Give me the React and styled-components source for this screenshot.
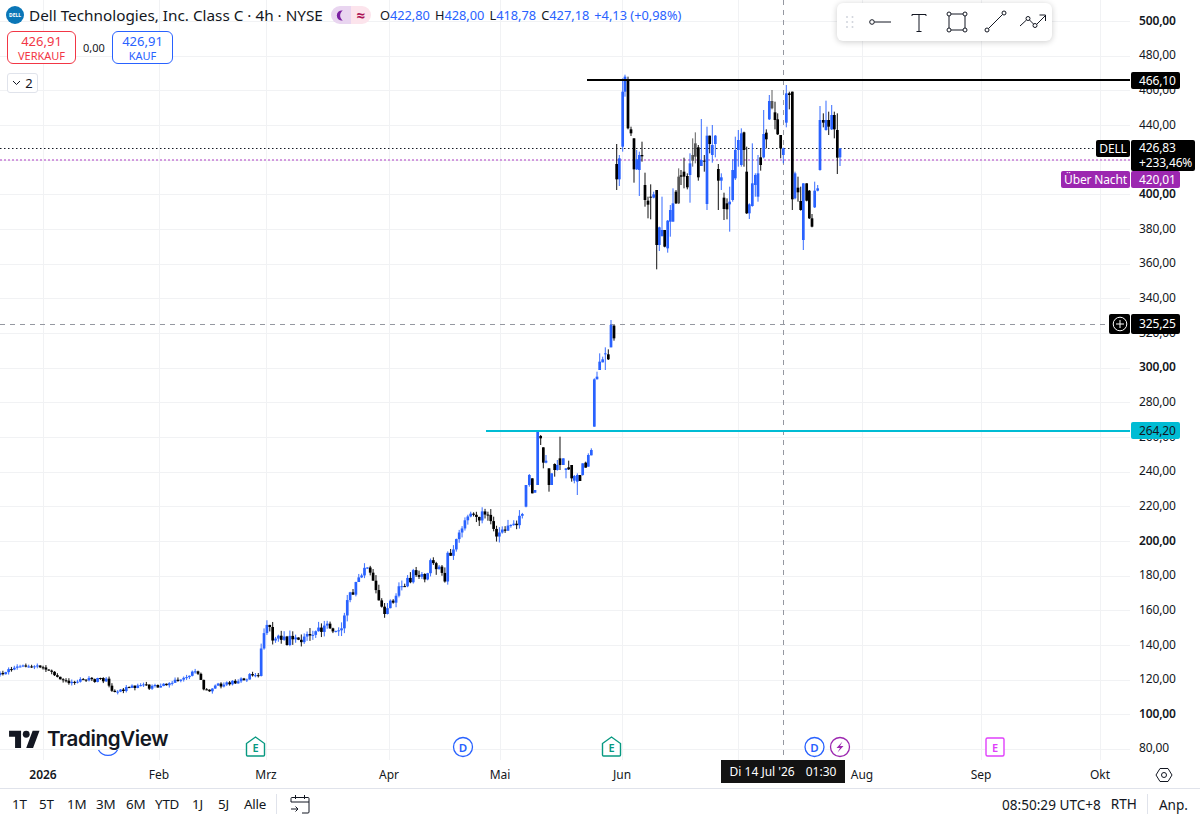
import React from "react";
import styled, { createGlobalStyle } from "styled-components";

const BLUE = "#2962ff";
const BLACK = "#000000";
const FONT = `"Noto Sans", "Open Sans", "DejaVu Sans", sans-serif`;

const Global = createGlobalStyle`
  html, body { margin: 0; padding: 0; background: #fff; overflow: hidden; }
  body { font-family: ${FONT}; color: #131722; }
  * { box-sizing: border-box; }
`;

// price labels top to bottom, the round hundreds are bolder
const prices = [500, 480, 460, 440, 420, 400, 380, 360, 340, 320, 300, 280, 260, 240, 220, 200, 180, 160, 140, 120, 100, 80];
const priceY = (i) => 21 + i * 34.67;
const gridX = [43, 159, 266, 389, 500, 622, 738, 862, 981, 1100];

// close path for the older part of the chart, read off the picture as [x, y]
const keys = [
  [0, 675], [10, 669], [25, 666], [45, 668], [52, 672], [60, 677], [65, 680], [70, 685], [80, 680], [95, 680],
  [107, 680], [112, 692], [120, 690], [135, 686], [155, 687], [170, 683], [180, 680], [195, 672], [200, 675], [205, 692],
  [215, 686], [235, 682], [250, 676], [258, 678], [261, 652], [264, 630], [270, 625], [273, 640], [285, 640], [300, 640],
  [320, 630], [330, 626], [340, 632], [347, 605], [355, 585], [363, 570], [368, 568], [375, 583], [380, 600], [385, 612],
  [388, 608], [393, 598], [402, 587], [410, 580], [413, 567], [418, 575], [425, 578], [430, 560], [437, 568], [445, 580],
  [447, 557], [453, 550], [458, 535], [465, 523], [470, 515], [477, 518], [482, 513], [490, 514], [493, 532], [498, 532],
  [505, 528], [513, 525], [522, 515], [525, 505],
];

const closeAt = (x) => {
  for (let i = 1; i < keys.length; i++) {
    if (x <= keys[i][0]) {
      const [x0, y0] = keys[i - 1];
      const [x1, y1] = keys[i];
      return y0 + ((y1 - y0) * (x - x0)) / (x1 - x0);
    }
  }
  return keys[keys.length - 1][1];
};

const rnd = (() => {
  let s = 4711;
  return () => {
    s = (s * 16807) % 2147483647;
    return s / 2147483647;
  };
})();

const older = [];
let prev = closeAt(0);
for (let x = 0; x < 525; x += 2.87) {
  const small = x < 260;
  const c = closeAt(x) + (rnd() - 0.5) * (small ? 4.5 : 10);
  const top = Math.min(prev, c);
  const bot = Math.max(prev, c);
  older.push({
    x,
    hi: top - rnd() * (small ? 2.5 : 6),
    top,
    bot: Math.max(bot, top + 1),
    lo: bot + rnd() * (small ? 2.5 : 6),
    up: c < prev,
  });
  prev = c;
}

// [zoom x, wick top, body top, body bottom, wick bottom, colour], in 3x crop coordinates
const breakout = [
  [138, 525, 525, 590, 592, "b"], [148, 492, 495, 525, 530, "b"], [157, 505, 505, 550, 550, "k"], [165, 540, 540, 548, 548, "b"],
  [173, 365, 365, 525, 525, "b"], [182, 375, 378, 385, 405, "k"], [190, 412, 412, 458, 475, "k"], [198, 435, 452, 458, 460, "b"],
  [207, 475, 475, 525, 545, "k"], [215, 490, 490, 525, 525, "b"], [224, 460, 462, 480, 500, "k"], [232, 450, 465, 480, 482, "b"],
  [240, 380, 445, 465, 480, "k"], [250, 445, 445, 465, 465, "b"], [258, 475, 475, 480, 505, "b"], [266, 452, 472, 478, 480, "k"],
  [275, 465, 465, 505, 515, "k"], [283, 495, 498, 512, 520, "b"], [292, 490, 495, 515, 555, "b"], [300, 495, 495, 513, 513, "k"],
  [308, 460, 460, 495, 497, "b"], [317, 455, 458, 473, 473, "k"], [325, 430, 435, 470, 470, "b"], [334, 415, 420, 436, 436, "b"],
  [343, 205, 208, 350, 350, "b"], [351, 185, 200, 208, 208, "b"], [359, 130, 155, 180, 180, "b"], [368, 140, 148, 157, 157, "b"],
  [376, 112, 130, 133, 180, "b"], [385, 118, 133, 148, 150, "k"], [393, 30, 45, 112, 112, "b"], [402, 45, 47, 85, 92, "k"],
];

const peak = [
  [110, 222, 282, 328, 360, "k"], [118, 255, 265, 328, 348, "b"], [128, 25, 65, 230, 245, "b"], [135, 14, 20, 65, 80, "b"],
  [144, 20, 32, 175, 178, "k"], [153, 170, 178, 190, 198, "k"], [162, 205, 205, 298, 338, "k"], [170, 240, 268, 298, 300, "b"],
  [178, 245, 255, 300, 378, "b"], [186, 215, 255, 259, 275, "k"], [195, 308, 345, 390, 410, "k"], [204, 380, 392, 404, 445, "k"],
  [212, 343, 380, 383, 448, "k"], [221, 365, 373, 383, 385, "b"], [230, 360, 360, 525, 598, "k"], [238, 470, 472, 525, 543, "b"],
  [246, 380, 480, 498, 500, "b"], [254, 480, 480, 530, 532, "k"], [263, 450, 452, 535, 548, "b"], [271, 405, 420, 455, 500, "b"],
  [279, 355, 400, 455, 455, "b"], [288, 360, 365, 400, 402, "k"], [296, 295, 320, 400, 402, "g"], [303, 300, 316, 320, 345, "k"],
  [312, 263, 305, 320, 355, "k"], [322, 310, 318, 352, 358, "k"], [330, 250, 280, 315, 398, "b"], [338, 205, 255, 272, 290, "g"],
  [346, 187, 220, 260, 280, "g"], [355, 225, 232, 322, 332, "k"], [364, 147, 270, 288, 288, "b"], [373, 255, 272, 275, 305, "k"],
  [381, 170, 197, 402, 420, "b"], [389, 197, 197, 222, 250, "k"], [397, 165, 225, 255, 278, "b"], [406, 195, 197, 222, 262, "b"],
  [415, 282, 297, 332, 420, "k"], [424, 310, 322, 332, 360, "b"], [432, 368, 383, 417, 450, "k"], [441, 385, 400, 418, 448, "k"],
  [449, 350, 395, 403, 485, "b"], [458, 268, 300, 390, 395, "b"], [466, 200, 240, 325, 330, "b"], [475, 180, 210, 240, 290, "b"],
  [484, 175, 190, 285, 290, "b"], [492, 185, 187, 240, 290, "k"], [500, 230, 305, 430, 432, "k"], [508, 400, 403, 430, 447, "b"],
  [517, 220, 340, 408, 410, "b"], [526, 310, 315, 345, 380, "b"], [534, 255, 310, 380, 395, "b"], [542, 235, 262, 285, 302, "k"],
  [551, 120, 192, 262, 265, "b"], [559, 178, 188, 208, 235, "k"], [568, 75, 93, 148, 150, "b"], [576, 60, 93, 115, 118, "g"],
  [585, 95, 127, 150, 178, "k"], [593, 130, 148, 193, 195, "k"], [602, 195, 195, 235, 265, "k"], [610, 233, 235, 255, 280, "b"],
  [619, 45, 70, 158, 172, "b"], [628, 65, 70, 75, 118, "k"], [637, 65, 65, 388, 420, "k"], [645, 305, 310, 385, 388, "b"],
  [654, 320, 353, 367, 395, "k"], [662, 350, 393, 420, 422, "k"], [670, 340, 340, 510, 540, "b"], [680, 340, 340, 392, 394, "k"],
  [688, 360, 362, 445, 447, "k"], [696, 432, 445, 470, 472, "k"], [704, 335, 362, 412, 414, "b"], [713, 345, 355, 362, 364, "b"],
  [720, 108, 150, 300, 302, "b"], [730, 130, 150, 158, 172, "k"], [738, 92, 150, 180, 182, "b"], [746, 125, 150, 170, 195, "k"],
  [755, 105, 135, 178, 180, "b"], [763, 125, 135, 178, 205, "k"], [772, 130, 180, 263, 312, "k"], [780, 235, 235, 262, 288, "b"],
];

const fromCrop = (list, ox, oy) =>
  list.map(([zx, hi, top, bot, lo, c]) => ({
    x: ox + zx / 3,
    hi: oy + hi / 3,
    top: oy + top / 3,
    bot: oy + bot / 3,
    lo: oy + lo / 3,
    color: c === "b" ? BLUE : c === "g" ? "#555" : BLACK,
  }));

const candles = [
  ...older.map((c) => ({ ...c, color: c.up ? BLUE : BLACK })),
  ...fromCrop(breakout, 480, 310),
  ...fromCrop(peak, 580, 70),
];

const Stage = styled.div`
  position: relative;
  width: 1200px;
  height: 818px;
  display: flex;
  flex-direction: column;
  overflow: hidden;
  background: #fff;
`;

const ChartRow = styled.div`
  display: flex;
  height: 760px;
  flex: none;
`;

const Pane = styled.div`
  position: relative;
  width: 1130px;
  height: 760px;
`;

const ChartSvg = styled.svg`
  display: block;
`;

const PriceAxis = styled.div`
  flex: 1;
  display: flex;
  flex-direction: column;
  padding: 3.7px 0 0 9px;
  overflow: hidden;
`;

const PriceLabel = styled.div`
  flex: none;
  height: 34.67px;
  line-height: 34.67px;
  font-size: 12px;
  letter-spacing: -0.15px;
  font-weight: ${(p) => (p.$bold ? 600 : 400)};
  color: #131722;
  white-space: nowrap;
`;

const Legend = styled.div`
  position: absolute;
  left: 6px;
  top: 5px;
  display: flex;
  flex-direction: column;
  align-items: flex-start;
`;

const TitleRow = styled.div`
  display: flex;
  align-items: center;
  height: 20px;
`;

const SymbolLogo = styled.div`
  width: 18px;
  height: 18px;
  border-radius: 50%;
  background: #0a76b7;
  color: #fff;
  font-size: 5px;
  font-weight: 700;
  display: flex;
  align-items: center;
  justify-content: center;
  margin-right: 5px;
`;

const Title = styled.div`
  font-size: 15.3px;
  white-space: nowrap;
  color: #131722;
`;

const SessionPill = styled.div`
  display: flex;
  height: 18px;
  margin-left: 8px;
  border-radius: 9px;
  overflow: hidden;
`;

const PillPart = styled.div`
  width: 20px;
  display: flex;
  align-items: center;
  justify-content: center;
  background: ${(p) => p.$bg};
  color: ${(p) => p.$fg};
  font-size: 15px;
  font-weight: 700;
`;

const Ohlc = styled.div`
  margin-left: 9px;
  font-size: 12.8px;
  white-space: nowrap;
  color: ${BLUE};
  display: flex;
  gap: 5px;
`;

const OhlcKey = styled.span`
  color: #131722;
`;

const TradeRow = styled.div`
  display: flex;
  align-items: center;
  margin: 6px 0 0 1px;
`;

const TradeBox = styled.div`
  width: ${(p) => p.$w}px;
  height: 33px;
  border: 1px solid ${(p) => p.$color};
  border-radius: 6px;
  color: ${(p) => p.$color};
  display: flex;
  flex-direction: column;
  align-items: center;
  justify-content: center;
  font-size: 13px;
  line-height: 15px;
  background: #fff;
`;

const TradeSub = styled.div`
  font-size: 11px;
  line-height: 13px;
`;

const Spread = styled.div`
  width: 36px;
  text-align: center;
  font-size: 11px;
  color: #131722;
`;

const CollapseButton = styled.div`
  margin: 9px 0 0 1px;
  width: 31px;
  height: 20px;
  border: 1px solid #e0e3eb;
  border-radius: 3px;
  display: flex;
  align-items: center;
  justify-content: center;
  gap: 4px;
  font-size: 13px;
  background: #fff;
`;

const DrawingBar = styled.div`
  position: absolute;
  left: 837px;
  top: 3px;
  width: 215px;
  height: 38px;
  display: flex;
  align-items: center;
  background: #fff;
  border-radius: 6px;
  box-shadow: 0 1px 6px rgba(0, 0, 0, 0.2);
`;

const DragHandle = styled.svg`
  margin-left: 7px;
  margin-right: 7px;
`;

const ToolIcons = styled.div`
  display: flex;
  gap: 10px;
`;

const Watermark = styled.div`
  position: absolute;
  left: 9px;
  top: 727px;
  display: flex;
  align-items: center;
  gap: 7px;
`;

const WatermarkText = styled.div`
  font-family: Inter, ${FONT};
  font-size: 20.6px;
  font-weight: 600;
  letter-spacing: -0.4px;
  line-height: 24px;
  color: #131722;
`;

const PriceTag = styled.div`
  position: absolute;
  left: ${(p) => p.$x}px;
  top: ${(p) => p.$y}px;
  width: ${(p) => p.$w}px;
  height: ${(p) => p.$h}px;
  background: ${(p) => p.$bg || BLACK};
  color: ${(p) => p.$fg || "#fff"};
  border-radius: 2px;
  padding-left: ${(p) => p.$pad ?? 8}px;
  font-size: 12px;
  letter-spacing: -0.15px;
  line-height: ${(p) => p.$line || p.$h}px;
  white-space: nowrap;
  display: ${(p) => (p.$center ? "flex" : "block")};
  align-items: center;
  justify-content: center;
`;

const TimeAxis = styled.div`
  position: relative;
  height: 29px;
  flex: none;
  display: flex;
  align-items: center;
  border-bottom: 1px solid #e0e3eb;
`;

const TimeCell = styled.div`
  width: ${(p) => p.$w}px;
  flex: none;
  text-align: center;
  font-size: 12px;
  font-weight: ${(p) => (p.$bold ? 600 : 400)};
  color: #131722;
`;

const AxisGear = styled.div`
  flex: 1;
  display: flex;
  justify-content: flex-start;
  padding-top: 1px;
  margin-left: -7px;
`;

const CrossTime = styled.div`
  position: absolute;
  left: 721px;
  top: 0;
  width: 124px;
  height: 23px;
  background: #131313;
  color: #fff;
  font-size: 12px;
  line-height: 23px;
  display: flex;
  justify-content: center;
  gap: 11px;
`;

const BottomBar = styled.div`
  flex: 1;
  display: flex;
  align-items: center;
  font-size: 13.6px;
  padding: 1px 0 0 12px;
  color: #131722;
`;

const Ranges = styled.div`
  display: grid;
  grid-template-columns: 27px 28px 29px 30px 29px 37px 26px 26px auto;
  padding-right: 10px;
  border-right: 1px solid #e0e3eb;
  height: 20px;
  line-height: 20px;
  font-size: 13.4px;
  letter-spacing: -0.2px;
`;

const CalendarIcon = styled.svg`
  margin-left: 13px;
`;

const Clock = styled.div`
  margin-left: auto;
  white-space: nowrap;
`;

const Rth = styled.div`
  margin-left: 10px;
  padding-right: 10px;
  border-right: 1px solid #e0e3eb;
  height: 20px;
  line-height: 20px;
`;

const Adjust = styled.div`
  margin-left: 11px;
  margin-right: 12px;
`;

const RayIcon = () => (
  <svg width="28" height="28" viewBox="0 0 28 28" fill="none" stroke="#131722">
    <circle cx="5" cy="14" r="2.3" />
    <path d="M7.5 14H24" />
  </svg>
);

const TextIcon = () => (
  <svg width="28" height="28" viewBox="0 0 28 28" fill="none" stroke="#131722">
    <path d="M7 8V6.5h14V8M14 6.5v17M11.5 23.5h5" />
  </svg>
);

const RectIcon = () => (
  <svg width="28" height="28" viewBox="0 0 28 28" fill="none" stroke="#131722">
    <path d="M6 8v12M22 8v12M8 6h12M8 22h12" />
    <circle cx="6" cy="6" r="2" />
    <circle cx="22" cy="6" r="2" />
    <circle cx="6" cy="22" r="2" />
    <circle cx="22" cy="22" r="2" />
  </svg>
);

const TrendIcon = () => (
  <svg width="28" height="28" viewBox="0 0 28 28" fill="none" stroke="#131722">
    <circle cx="6" cy="22" r="2" />
    <circle cx="23" cy="5" r="2" />
    <path d="M7.5 20.5 21.5 6.5" />
  </svg>
);

const PathIcon = () => (
  <svg width="28" height="28" viewBox="0 0 28 28" fill="none" stroke="#131722">
    <path d="M1 18 7.5 12M10.5 12 14.5 16M18 16 26 8M20.5 7H26.5V13" />
    <circle cx="9" cy="10.5" r="2" />
    <circle cx="16" cy="17.5" r="2" />
  </svg>
);

const Candle = ({ c }) => (
  <g fill={c.color}>
    <rect x={c.x - 0.55} y={c.hi} width="1.1" height={Math.max(c.lo - c.hi, 0.5)} opacity="0.85" />
    <rect x={c.x - 1.35} y={c.top} width="2.7" height={Math.max(c.bot - c.top, 1)} />
  </g>
);

const Chart = () => (
  <ChartSvg width="1130" height="760" viewBox="0 0 1130 760">
    {prices.map((p, i) => (
      <rect key={p} x="0" y={Math.round(priceY(i))} width="1130" height="1" fill="#f1f2f4" />
    ))}
    {gridX.map((x) => (
      <rect key={x} x={x} y="0" width="1" height="760" fill="#f1f2f4" />
    ))}

    <path d="M0 148.5H1096" stroke="#131722" strokeDasharray="1.5 2.5" />
    <path d="M0 160H1130" stroke="#c77dd6" strokeWidth="1.5" strokeDasharray="2 2" />
    <path d="M0 324.5H1108" stroke="#9598a1" strokeDasharray="5 5" />
    <path d="M783.5 0V760" stroke="#9598a1" strokeDasharray="5 5" />

    {candles.map((c, i) => (
      <Candle key={i} c={c} />
    ))}

    <rect x="587" y="79" width="543" height="2" fill="#000" />
    <rect x="486" y="430" width="644" height="2" fill="#00bcd4" />

    {/* events on the time line */}
    <path d="M98.5 750a11 11 0 0 0 19 0" fill="none" stroke={BLUE} strokeWidth="1.3" />
    <path d="M246.5 743.5 255.5 737l9 6.5V755a1 1 0 0 1-1 1h-16a1 1 0 0 1-1-1Z" fill="#fff" stroke="#089981" strokeWidth="1.4" />
    <text x="255.5" y="751.5" textAnchor="middle" fontSize="11" fontWeight="600" fill="#089981">E</text>
    <circle cx="463" cy="747" r="9.5" fill="#fff" stroke={BLUE} strokeWidth="1.3" />
    <text x="463" y="751.5" textAnchor="middle" fontSize="11.5" fontWeight="600" fill={BLUE}>D</text>
    <path d="M602.5 743.5 611.5 737l9 6.5V755a1 1 0 0 1-1 1h-16a1 1 0 0 1-1-1Z" fill="#fff" stroke="#089981" strokeWidth="1.4" />
    <text x="611.5" y="751.5" textAnchor="middle" fontSize="11" fontWeight="600" fill="#089981">E</text>
    <circle cx="814.5" cy="747" r="9.5" fill="#fff" stroke={BLUE} strokeWidth="1.3" />
    <text x="814.5" y="751.5" textAnchor="middle" fontSize="11.5" fontWeight="600" fill={BLUE}>D</text>
    <circle cx="840" cy="747" r="9.5" fill="#fff" stroke="#9c27b0" strokeWidth="1.3" />
    <path d="M842.5 741.5 836.5 748h3.5l-2.5 4.500 6-6.500h-3.500Z" fill="#9c27b0" />
    <rect x="986" y="738" width="18" height="18" rx="1.5" fill="#fff" stroke="#e040fb" strokeWidth="1.4" />
    <text x="995" y="751.500" textAnchor="middle" fontSize="11" fontWeight="600" fill="#e040fb">E</text>
  </ChartSvg>
);

const timeCells = [
  { w: 86, t: "2026", bold: true },
  { w: 146, t: "Feb" },
  { w: 68, t: "Mrz" },
  { w: 178, t: "Apr" },
  { w: 44, t: "Mai" },
  { w: 200, t: "Jun" },
  { w: 78, t: "" },
  { w: 124, t: "Aug" },
  { w: 114, t: "Sep" },
  { w: 124, t: "Okt" },
];

const ranges = ["1T", "5T", "1M", "3M", "6M", "YTD", "1J", "5J", "Alle"];

export default function App() {
  return (
    <Stage>
      <Global />
      <ChartRow>
        <Pane>
          <Chart />
          <Legend>
            <TitleRow>
              <SymbolLogo>DELL</SymbolLogo>
              <Title>Dell Technologies, Inc. Class C · 4h · NYSE</Title>
              <SessionPill>
                <PillPart $bg="#e9d5f0" $fg="#7b1fa2">
                  <svg width="11" height="11" viewBox="0 0 12 12">
                    <path d="M8.500 0.600a5.500 5.500 0 1 0 0 10.800 6.500 6.500 0 0 1 0-10.800Z" fill="#7b1fa2" />
                  </svg>
                </PillPart>
                <PillPart $bg="#fce4ec" $fg="#ad1457">≈</PillPart>
              </SessionPill>
              <Ohlc>
                <span><OhlcKey>O</OhlcKey>422,80</span>
                <span><OhlcKey>H</OhlcKey>428,00</span>
                <span><OhlcKey>L</OhlcKey>418,78</span>
                <span><OhlcKey>C</OhlcKey>427,18</span>
                <span>+4,13 (+0,98%)</span>
              </Ohlc>
            </TitleRow>
            <TradeRow>
              <TradeBox $w={69} $color="#f23645">
                426,91
                <TradeSub>VERKAUF</TradeSub>
              </TradeBox>
              <Spread>0,00</Spread>
              <TradeBox $w={61} $color={BLUE}>
                426,91
                <TradeSub>KAUF</TradeSub>
              </TradeBox>
            </TradeRow>
            <CollapseButton>
              <svg width="9" height="6" viewBox="0 0 9 6" fill="none" stroke="#131722">
                <path d="M1 1 4.500 4.500 8 1" />
              </svg>
              2
            </CollapseButton>
          </Legend>
          <DrawingBar>
            <DragHandle width="16" height="16" viewBox="0 0 16 16" fill="#d1d4dc">
              <circle cx="3" cy="3" r="1" />
              <circle cx="8.500" cy="3" r="1" />
              <circle cx="3" cy="8" r="1" />
              <circle cx="8.500" cy="8" r="1" />
              <circle cx="3" cy="13" r="1" />
              <circle cx="8.500" cy="13" r="1" />
            </DragHandle>
            <ToolIcons>
              <RayIcon />
              <TextIcon />
              <RectIcon />
              <TrendIcon />
              <PathIcon />
            </ToolIcons>
          </DrawingBar>
          <Watermark>
            <svg width="31" height="18" viewBox="0 0 36 21" fill="#131722">
              <path d="M14 21H7V8H0V1h14v20ZM28 21h-8l7.500-20h8L28 21Z" />
              <circle cx="20" cy="5" r="4" />
            </svg>
            <WatermarkText>TradingView</WatermarkText>
          </Watermark>
        </Pane>
        <PriceAxis>
          {prices.map((p) => (
            <PriceLabel key={p} $bold={p % 100 === 0}>{p === 420 ? "" : `${p},00`}</PriceLabel>
          ))}
        </PriceAxis>
      </ChartRow>

      <PriceTag $x={1131} $y={72} $w={49} $h={17}>466,10</PriceTag>
      <PriceTag $x={1096} $y={140} $w={34} $h={17} $pad={0} $center>DELL</PriceTag>
      <PriceTag $x={1131} $y={140} $w={64} $h={31} $line={15}>426,83<br />+233,46%</PriceTag>
      <PriceTag $x={1061} $y={171} $w={69} $h={17} $bg="#9c27b0" $pad={0} $center>Über Nacht</PriceTag>
      <PriceTag $x={1131} $y={171} $w={49} $h={17} $bg="#9c27b0">420,01</PriceTag>
      <PriceTag $x={1109} $y={314} $w={21} $h={20} $pad={0} $center>
        <svg width="16" height="16" viewBox="0 0 16 16" fill="none" stroke="#fff">
          <circle cx="8" cy="8" r="6.800" />
          <path d="M8 4v8M4 8h8" />
        </svg>
      </PriceTag>
      <PriceTag $x={1131} $y={314} $w={49} $h={20}>325,25</PriceTag>
      <PriceTag $x={1131} $y={422} $w={49} $h={17} $bg="#00bcd4" $fg="#131722">264,20</PriceTag>

      <TimeAxis>
        {timeCells.map((c, i) => (
          <TimeCell key={i} $w={c.w} $bold={c.bold}>{c.t}</TimeCell>
        ))}
        <AxisGear>
          <svg width="18" height="18" viewBox="0 0 18 18" fill="none" stroke="#131722">
            <path d="M5 2.500h8L17 9l-4 6.500H5L1 9Z" />
            <circle cx="9" cy="9" r="2.500" />
          </svg>
        </AxisGear>
        <CrossTime>
          <span>Di 14 Jul '26</span>
          <span>01:30</span>
        </CrossTime>
      </TimeAxis>

      <BottomBar>
        <Ranges>
          {ranges.map((r) => (
            <span key={r}>{r}</span>
          ))}
        </Ranges>
        <CalendarIcon width="20" height="20" viewBox="0 0 20 20" fill="none" stroke="#131722">
          <path d="M1 8V4.500a1 1 0 0 1 1-1h16a1 1 0 0 1 1 1V18a1 1 0 0 1-1 1h-6M1 8h18M5.500 1v4M14.500 1v4M1 15h7M5.500 12.500 8 15l-2.500 2.500" />
        </CalendarIcon>
        <Clock>08:50:29 UTC+8</Clock>
        <Rth>RTH</Rth>
        <Adjust>Anp.</Adjust>
      </BottomBar>
    </Stage>
  );
}
